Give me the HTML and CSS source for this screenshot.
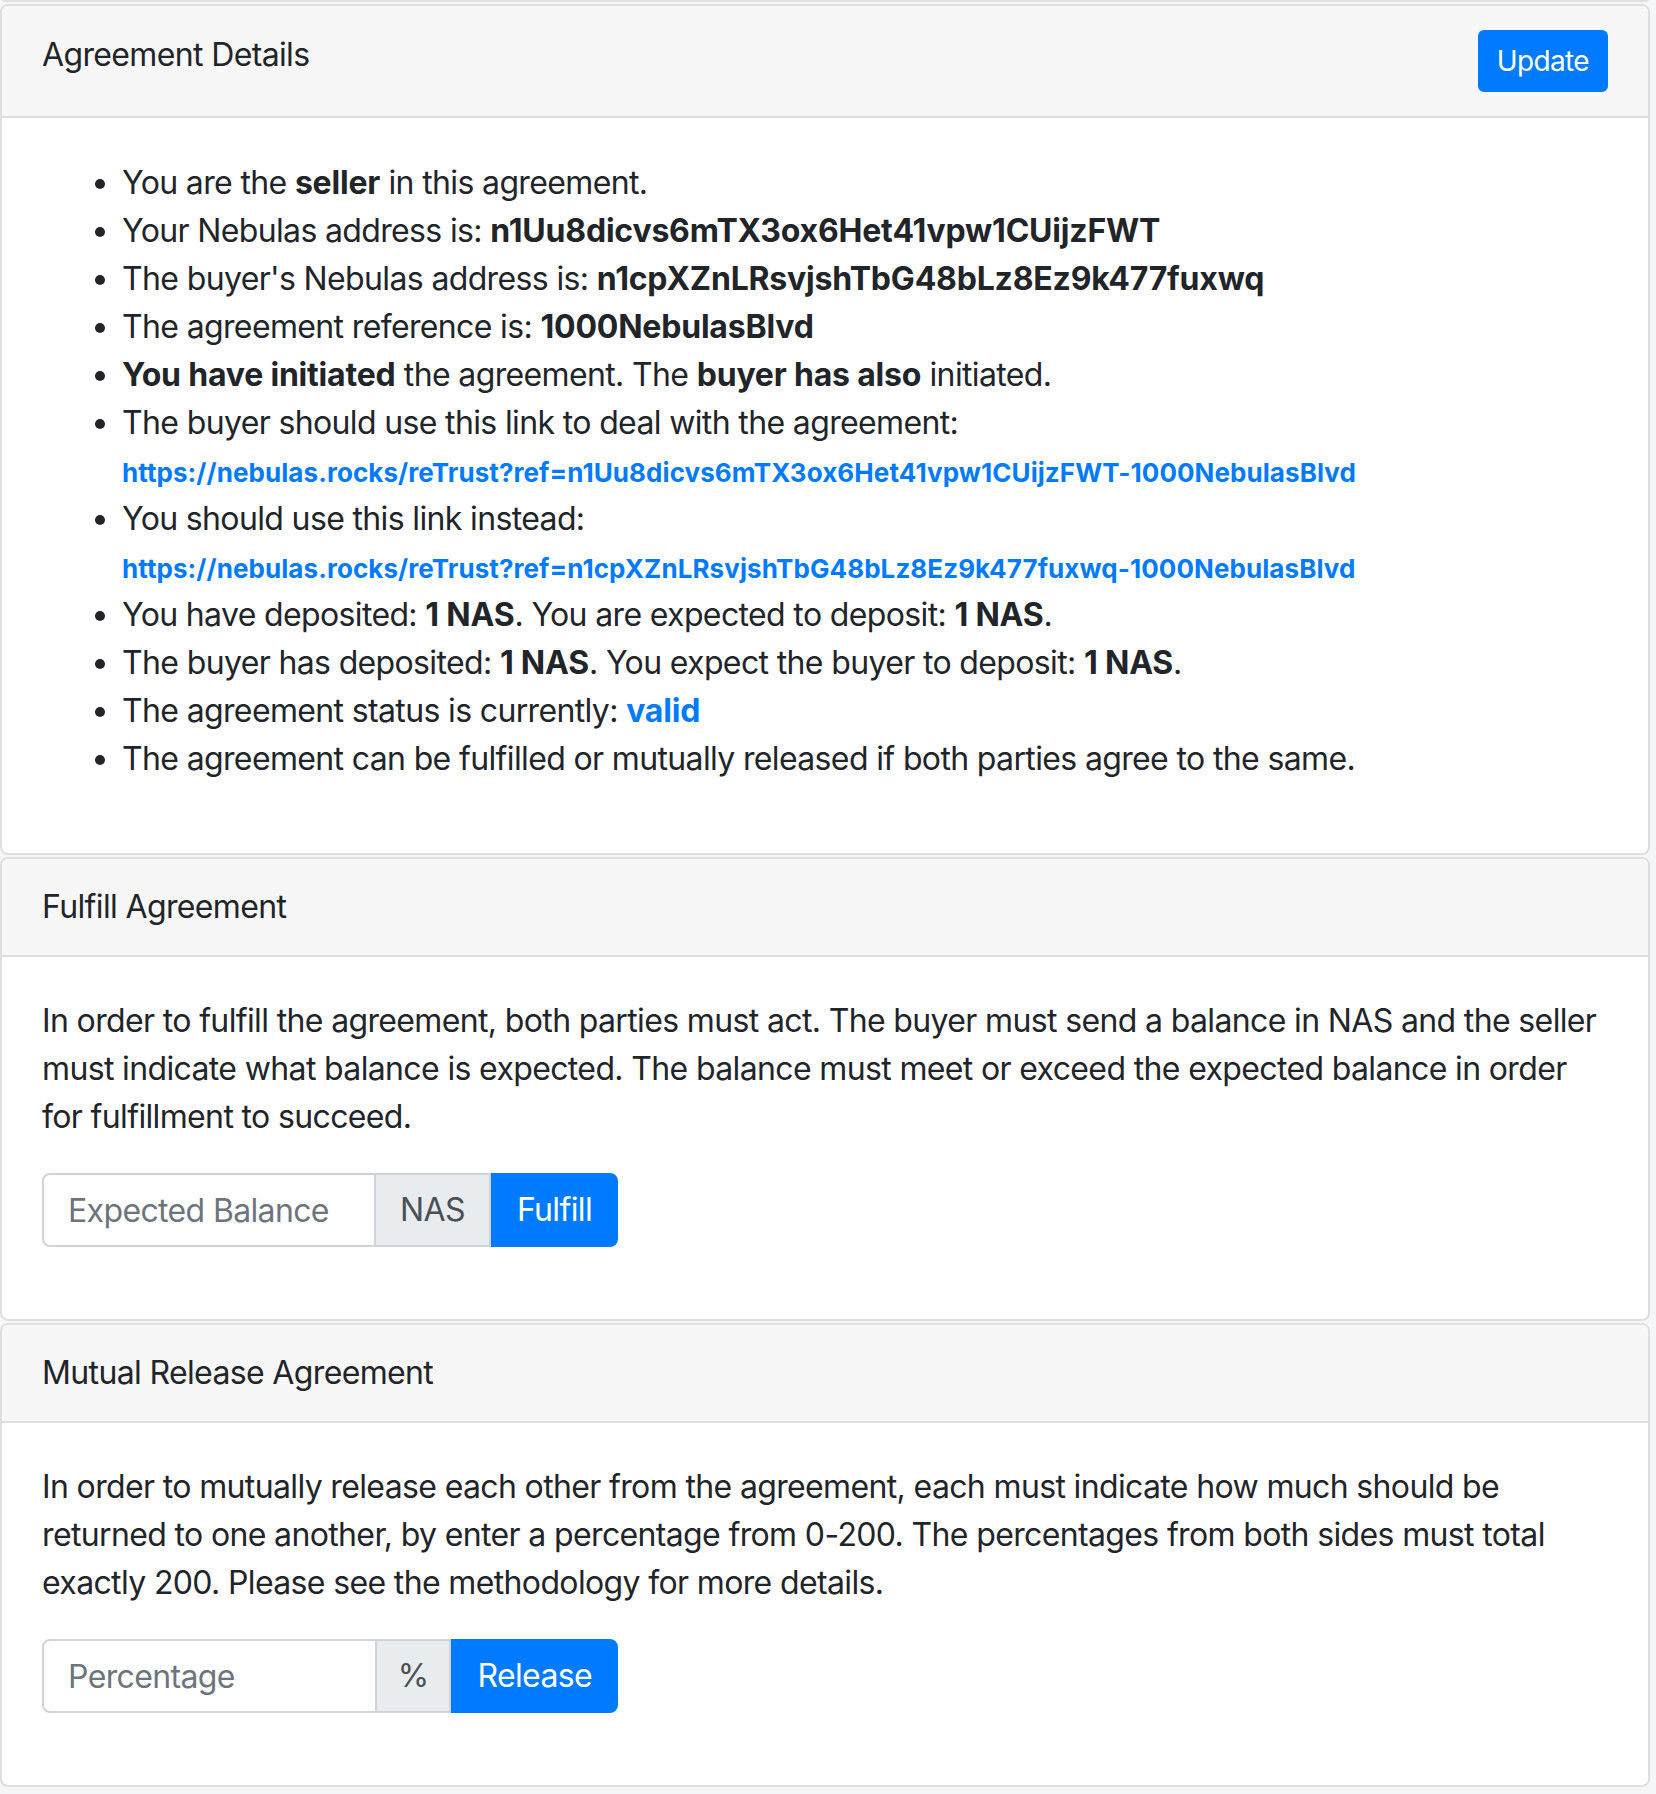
FILE: index.html
```html
<!DOCTYPE html>
<html lang="en">
<head>
<meta charset="utf-8">
<title>Agreement</title>
<link rel="stylesheet" href="styles.css">
</head>
<body>
<div class="card card-prev"></div>

<section class="card">
  <div class="card-header header-row">
    <span class="card-title">Agreement Details</span>
    <button class="btn btn-primary btn-sm" type="button">Update</button>
  </div>
  <div class="card-body details-body">
    <ul class="details">
      <li>You are the <b>seller</b> in this agreement.</li>
      <li>Your Nebulas address is: <b>n1Uu8dicvs6mTX3ox6Het41vpw1CUijzFWT</b></li>
      <li>The buyer's Nebulas address is: <b>n1cpXZnLRsvjshTbG48bLz8Ez9k477fuxwq</b></li>
      <li>The agreement reference is: <b>1000NebulasBlvd</b></li>
      <li><b>You have initiated</b> the agreement. The <b>buyer has also</b> initiated.</li>
      <li>The buyer should use this link to deal with the agreement:<br><a class="ref-link" href="#">https://nebulas.rocks/reTrust?ref=n1Uu8dicvs6mTX3ox6Het41vpw1CUijzFWT-1000NebulasBlvd</a></li>
      <li>You should use this link instead:<br><a class="ref-link" href="#">https://nebulas.rocks/reTrust?ref=n1cpXZnLRsvjshTbG48bLz8Ez9k477fuxwq-1000NebulasBlvd</a></li>
      <li>You have deposited: <b>1 NAS</b>. You are expected to deposit: <b>1 NAS</b>.</li>
      <li>The buyer has deposited: <b>1 NAS</b>. You expect the buyer to deposit: <b>1 NAS</b>.</li>
      <li>The agreement status is currently: <b class="text-primary">valid</b></li>
      <li>The agreement can be fulfilled or mutually released if both parties agree to the same.</li>
    </ul>
  </div>
</section>

<section class="card">
  <div class="card-header">Fulfill Agreement</div>
  <div class="card-body">
    <p>In order to fulfill the agreement, both parties must act. The buyer must send a balance in NAS and the seller must indicate what balance is expected. The balance must meet or exceed the expected balance in order for fulfillment to succeed.</p>
    <div class="input-group">
      <input class="form-control" type="text" placeholder="Expected Balance">
      <span class="input-group-text">NAS</span>
      <button class="btn btn-primary btn-append" type="button">Fulfill</button>
    </div>
  </div>
</section>

<section class="card">
  <div class="card-header">Mutual Release Agreement</div>
  <div class="card-body">
    <p>In order to mutually release each other from the agreement, each must indicate how much should be returned to one another, by enter a percentage from 0-200. The percentages from both sides must total exactly 200. Please see the methodology for more details.</p>
    <div class="input-group">
      <input class="form-control" type="text" placeholder="Percentage">
      <span class="input-group-text addon-pct">%</span>
      <button class="btn btn-primary btn-append" type="button">Release</button>
    </div>
  </div>
</section>
</body>
</html>
```

FILE: styles.css
```css
* { box-sizing: border-box; }

html, body { margin: 0; padding: 0; }

body {
  background: #f5f6f8;
  font-family: Inter, "Noto Sans", sans-serif;
  font-size: 32px;
  line-height: 48px;
  letter-spacing: -0.64px;
  color: #212529;
  width: 1650px;
}

.card {
  background: #fff;
  border: 2px solid #dfdfdf;
  border-radius: 8px;
  margin-bottom: 2px;
  overflow: hidden;
}

.card-prev {
  height: 10px;
  margin-top: -8px;
}

.card-header {
  background: #f7f7f7;
  border-bottom: 2px solid #dfdfdf;
  padding: 24px 40px;
}

.header-row {
  display: flex;
  justify-content: space-between;
  align-items: flex-start;
}

.card-title { padding-top: 1px; }

.card-body { padding: 40px; }

.details-body { padding: 41px 40px 38px; }

.details {
  margin: 0 0 32px;
  padding-left: 80px;
}

p { margin: 0 0 32px; }

b {
  font-weight: 700;
  letter-spacing: -0.2px;
}

.ref-link {
  color: #007bff;
  font-weight: 700;
  font-size: 26px;
  line-height: 1;
  letter-spacing: 0.07px;
  text-decoration: none;
}

.text-primary { color: #007bff; }

.btn {
  font-family: inherit;
  letter-spacing: inherit;
  color: #fff;
  background: #007bff;
  border: 2px solid #007bff;
  cursor: pointer;
}

.btn-sm {
  font-size: 28px;
  line-height: 42px;
  padding: 8px 17px;
  border-radius: 6px;
}

.input-group {
  display: flex;
  width: 576px;
  height: 74px;
  margin-bottom: 32px;
}

.form-control {
  flex: 1 1 auto;
  min-width: 0;
  font-family: inherit;
  font-size: 32px;
  letter-spacing: inherit;
  color: #495057;
  background: #fff;
  border: 2px solid #ced4da;
  border-radius: 8px 0 0 8px;
  padding: 12px 24px;
  outline: none;
}

.form-control::placeholder { color: #6c757d; opacity: 1; }

.input-group-text {
  display: flex;
  align-items: center;
  padding: 0 24px;
  background: #e9ecef;
  border: 2px solid #ced4da;
  border-left: 0;
  color: #495057;
}

.addon-pct { padding: 0 21px; }

.btn-append {
  font-size: 32px;
  line-height: 48px;
  padding: 0 24px;
  border-radius: 0 8px 8px 0;
}
```
